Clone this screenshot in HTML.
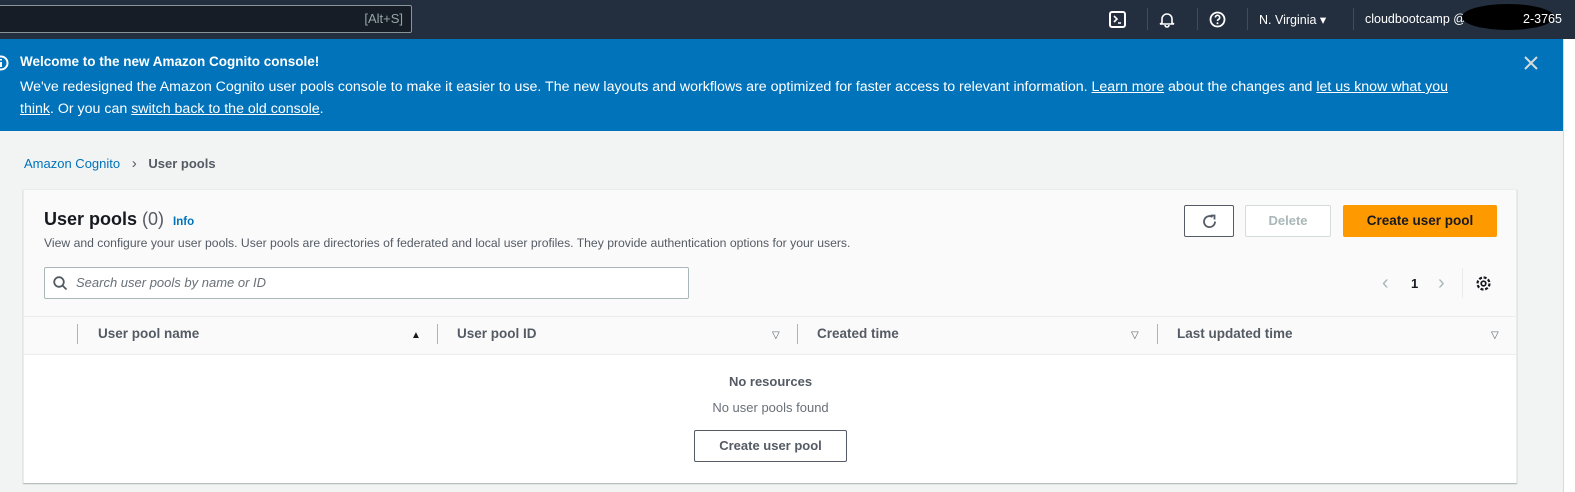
<!DOCTYPE html>
<html><head><meta charset="utf-8"><style>
*{box-sizing:border-box;margin:0;padding:0}
body{width:1575px;height:492px;overflow:hidden;background:#f2f3f3;font-family:"Liberation Sans",sans-serif;position:relative;color:#16191f}
.nav{position:absolute;left:0;top:0;width:1575px;height:39px;background:#232f3e}
.search{position:absolute;left:-5px;top:5px;width:417px;height:28px;background:#161d26;border:1px solid #879596;border-radius:2px;color:#95a5a6;font-size:13px;text-align:right;padding:5px 8px}
.nav .t{position:absolute;color:#fff;font-size:12.5px;top:12px}
.sep{position:absolute;top:8px;width:1px;height:22px;background:#414d5c}
.banner{position:absolute;left:0;top:39px;width:1563px;height:92px;background:#0073bb;color:#fff;font-size:14.2px}
.rside{position:absolute;left:1563px;top:39px;width:12px;height:453px;background:#fff;border-left:1px solid #d5dbdb}
.banner b{position:absolute;left:20px;top:15px;font-size:13.5px}
.banner p{position:absolute;left:20px;top:37px;width:1445px;line-height:22px}
.banner u{text-decoration:underline}
.crumb{position:absolute;left:24px;top:155px;font-size:13px}
.card{position:absolute;left:23px;top:189px;width:1494px;height:294px;background:#fafafa;border:1px solid #eaeded;box-shadow:0 1px 1px rgba(0,28,36,.3)}
.btn{position:absolute;height:32px;border-radius:2px;font-size:13px;font-weight:bold;text-align:center;line-height:30px}
.th{position:absolute;top:326px;font-size:13.5px;font-weight:bold;color:#545b64}
.vs{position:absolute;top:324px;width:1px;height:20px;background:#aab7b8}
.tri{position:absolute;top:330px;font-size:10px;color:#545b64}
</style></head><body>
<div class="nav">
<div class="search">[Alt+S]</div>
<svg style="position:absolute;left:1109px;top:11px" width="17" height="17" viewBox="0 0 17 17"><rect x="1" y="1" width="15" height="15" rx="2" fill="none" stroke="#fff" stroke-width="2"/><path d="M5 5l3 3-3 3M9 12h3" stroke="#fff" stroke-width="1.6" fill="none"/></svg>
<div class="sep" style="left:1147px"></div>
<svg style="position:absolute;left:1159px;top:11px" width="16" height="17" viewBox="0 0 16 17"><path d="M3 12V8a5 5 0 0 1 10 0v4l2 1H1z M6 14a2 2 0 0 0 4 0" stroke="#fff" stroke-width="1.6" fill="none"/></svg>
<div class="sep" style="left:1197px"></div>
<svg style="position:absolute;left:1209px;top:11px" width="17" height="17" viewBox="0 0 17 17"><circle cx="8.5" cy="8.5" r="7" stroke="#fff" stroke-width="1.8" fill="none"/><path d="M6.3 6.5a2.2 2.2 0 1 1 3 2c-.7.3-.8.8-.8 1.5" stroke="#fff" stroke-width="1.6" fill="none"/><circle cx="8.5" cy="12.3" r="1" fill="#fff"/></svg>
<div class="sep" style="left:1247px"></div>
<div class="t" style="left:1259px">N. Virginia ▾</div>
<div class="sep" style="left:1353px"></div>
<div class="t" style="left:1365px">cloudbootcamp @</div>
<div style="position:absolute;left:1462px;top:4px;width:92px;height:26px;background:#000;border-radius:50%"></div>
<div class="t" style="left:1523px">2-3765</div>
</div>
<div class="banner">
<svg style="position:absolute;left:-7px;top:16px" width="16" height="16" viewBox="0 0 16 16"><circle cx="8" cy="8" r="6.5" stroke="#fff" stroke-width="2" fill="none"/><path d="M8 7v5M8 4v1.5" stroke="#fff" stroke-width="2"/></svg>
<b>Welcome to the new Amazon Cognito console!</b>
<p>We've redesigned the Amazon Cognito user pools console to make it easier to use. The new layouts and workflows are optimized for faster access to relevant information. <u>Learn more</u> about the changes and <u>let us know what you think</u>. Or you can <u>switch back to the old console</u>.</p>
<svg style="position:absolute;left:1524px;top:17px" width="14" height="14" viewBox="0 0 14 14"><path d="M1 1l12 12M13 1L1 13" stroke="#d5dbdb" stroke-width="2"/></svg>
</div>
<div class="rside"></div>
<div class="crumb"><span style="color:#0073bb">Amazon Cognito</span> <span style="color:#545b64;margin:0 8px;font-size:15px">&#x203A;</span> <b style="color:#545b64">User pools</b></div>
<div class="card">
<div style="position:absolute;left:0;top:164px;width:1492px;height:129px;background:#fff;border-top:1px solid #eaeded"></div>
<div style="position:absolute;left:0;top:126px;width:1492px;height:1px;background:#eaeded"></div>
</div>
<div style="position:absolute;left:44px;top:209px;font-size:18px;font-weight:bold">User pools <span style="font-weight:normal;color:#545b64">(0)</span> <span style="color:#0073bb;font-size:11.5px;margin-left:4px">Info</span></div>
<div style="position:absolute;left:44px;top:236px;font-size:12.2px;color:#545b64">View and configure your user pools. User pools are directories of federated and local user profiles. They provide authentication options for your users.</div>
<div style="position:absolute;left:44px;top:267px;width:645px;height:32px;background:#fff;border:1px solid #aab7b8;border-radius:2px"></div>
<svg style="position:absolute;left:53px;top:276px" width="15" height="15" viewBox="0 0 15 15"><circle cx="6" cy="6" r="4.8" stroke="#545b64" stroke-width="1.8" fill="none"/><path d="M9.5 9.5l4 4" stroke="#545b64" stroke-width="1.8"/></svg>
<div style="position:absolute;left:76px;top:275px;font-size:13px;font-style:italic;color:#687078">Search user pools by name or ID</div>
<div class="btn" style="left:1184px;top:205px;width:50px;border:1px solid #545b64;background:#fff"><svg style="margin-top:7px" width="17" height="17" viewBox="0 0 17 17"><path d="M14 8.5A5.5 5.5 0 1 1 11.5 4" stroke="#545b64" stroke-width="1.8" fill="none"/><path d="M9.5 2.5h4v4" stroke="#545b64" stroke-width="1.8" fill="none"/></svg></div>
<div class="btn" style="left:1245px;top:205px;width:86px;border:1px solid #d5dbdb;background:#fff;color:#aab7b8">Delete</div>
<div class="btn" style="left:1343px;top:205px;width:154px;background:#ff9900;border:1px solid #ff9900;color:#16191f;font-size:13.5px">Create user pool</div>
<div style="position:absolute;left:1382px;top:272px;font-size:20px;color:#aab7b8">&#x2039;</div>
<div style="position:absolute;left:1411px;top:276px;font-size:13px;font-weight:bold">1</div>
<div style="position:absolute;left:1438px;top:272px;font-size:20px;color:#aab7b8">&#x203A;</div>
<div style="position:absolute;left:1462px;top:268px;width:1px;height:30px;background:#eaeded"></div>
<svg style="position:absolute;left:1475px;top:275px" width="17" height="17" viewBox="0 0 17 17"><circle cx="8.5" cy="8.5" r="2.3" stroke="#16191f" stroke-width="1.7" fill="none"/><circle cx="8.5" cy="8.5" r="6" stroke="#16191f" stroke-width="2.2" stroke-dasharray="3 1.7" fill="none"/></svg>
<div class="vs" style="left:77px"></div>
<div class="th" style="left:98px">User pool name</div><div class="tri" style="left:411px;color:#16191f">▲</div>
<div class="vs" style="left:437px"></div>
<div class="th" style="left:457px">User pool ID</div><div class="tri" style="left:772px">▽</div>
<div class="vs" style="left:797px"></div>
<div class="th" style="left:817px">Created time</div><div class="tri" style="left:1131px">▽</div>
<div class="vs" style="left:1157px"></div>
<div class="th" style="left:1177px">Last updated time</div><div class="tri" style="left:1491px">▽</div>
<div style="position:absolute;left:694px;top:374px;width:153px;text-align:center;font-size:13px;font-weight:bold;color:#545b64">No resources</div>
<div style="position:absolute;left:694px;top:400px;width:153px;text-align:center;font-size:13px;color:#687078">No user pools found</div>
<div class="btn" style="left:694px;top:430px;width:153px;border:1px solid #545b64;background:#fff;color:#545b64">Create user pool</div>
</body></html>
